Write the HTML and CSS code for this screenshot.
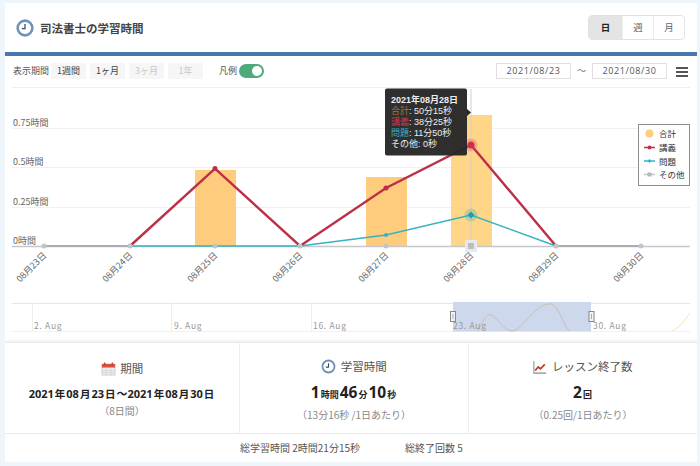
FILE: index.html
```html
<!DOCTYPE html>
<html lang="ja">
<head>
  <meta charset="UTF-8" />
  <meta name="viewport" content="width=device-width, initial-scale=1" />
  <title>司法書士の学習時間</title>
  <link rel="stylesheet" href="styles.css">
</head>
<body>

  <div class="panel">
    <div class="panel-head">
      <div class="panel-title">
        <svg class="clock" viewBox="0 0 20 20" width="18" height="18">
          <circle cx="10" cy="10" r="8.2" fill="#fff" stroke="#6f93b8" stroke-width="2.8"/>
          <path d="M10 5.500V10.800H6.500" fill="none" stroke="#3c4a58" stroke-width="1.400"/>
        </svg>
        <h2>司法書士の学習時間</h2>
      </div>
      <div class="unit-group">
        <span class="unit active">日</span>
        <span class="unit">週</span>
        <span class="unit">月</span>
      </div>
    </div>

    <div class="toolbar">
      <span class="toolbar-label">表示期間</span>
      <div class="range-group">
        <span class="range">1週間</span>
        <span class="range">1ヶ月</span>
        <span class="range off">3ヶ月</span>
        <span class="range off">1年</span>
      </div>
      <span class="legend-label">凡例</span>
      <span class="toggle"></span>
      <div class="dates">
        <span class="date-box">2021/08/23</span>
        <span class="date-sep">～</span>
        <span class="date-box">2021/08/30</span>
        <span class="burger"><i></i><i></i><i></i></span>
      </div>
    </div>

    <!-- viewBox uses page coordinates so the points read like the screenshot -->
    <svg class="chart" viewBox="5 88 692 252" width="692" height="252">
      <g stroke="#f0f0f0" stroke-width="1">
        <path d="M12 128.500H690M12 167.500H690M12 207.500H690"/>
      </g>
      <g class="axis-y">
        <text x="13" y="126">0.75時間</text>
        <text x="13" y="165">0.5時間</text>
        <text x="13" y="205">0.25時間</text>
        <text x="13" y="244">0時間</text>
      </g>

      <rect x="195" y="170" width="41" height="76" fill="#ffcb7d"/>
      <rect x="366" y="177" width="41" height="69" fill="#ffcb7d"/>
      <rect x="451" y="115" width="41" height="131" fill="#ffd687"/>
      <path d="M471 89V246" stroke="#cfcfcf" stroke-width="1"/>
      <path d="M12 246.500H690" stroke="#c4c8cc" stroke-width="1.500"/>

      <path d="M44 246H130M556 246H641" stroke="#aaacb0" stroke-width="2"/>
      <path d="M130 246H300L386 235L471 215L556 246" fill="none" stroke="#35b3c1" stroke-width="1.500"/>
      <path d="M130 246L215 168.500L300 246L386 188L471 145L556 246" fill="none" stroke="#bd2f48" stroke-width="2.400"/>

      <g fill="#c4c4c8">
        <circle cx="44" cy="246" r="2.500"/>
        <circle cx="130" cy="246" r="2.500"/>
        <circle cx="215" cy="246" r="2.500"/>
        <circle cx="300" cy="246" r="2.500"/>
        <circle cx="386" cy="246" r="2.500"/>
        <circle cx="556" cy="246" r="2.500"/>
        <circle cx="641" cy="246" r="2.500"/>
      </g>
      <circle cx="215" cy="168.500" r="2.500" fill="#bd2f48"/>
      <circle cx="386" cy="188" r="2.500" fill="#bd2f48"/>
      <circle cx="386" cy="235" r="2" fill="#35b3c1"/>
      <rect x="465" y="240" width="12" height="12" fill="#e9e9ea"/>
      <rect x="468" y="243" width="6" height="6" fill="#bdbdc0"/>
      <circle cx="471" cy="215" r="6.500" fill="#35b3c1" fill-opacity=".3"/>
      <path d="M471 211.500L474.500 215L471 218.500L467.500 215Z" fill="#1f9fb0"/>
      <circle cx="471" cy="145" r="6.500" fill="#e0405c" fill-opacity=".3"/>
      <circle cx="471" cy="145" r="3.500" fill="#cb2f4f"/>

      <g class="axis-x">
        <text transform="translate(47 256) rotate(-45)">08月23日</text>
        <text transform="translate(133 256) rotate(-45)">08月24日</text>
        <text transform="translate(218 256) rotate(-45)">08月25日</text>
        <text transform="translate(303 256) rotate(-45)">08月26日</text>
        <text transform="translate(389 256) rotate(-45)">08月27日</text>
        <text transform="translate(474 256) rotate(-45)">08月28日</text>
        <text transform="translate(559 256) rotate(-45)">08月29日</text>
        <text transform="translate(644 256) rotate(-45)">08月30日</text>
      </g>

      <path d="M467 109L471 112.500L467 116Z" fill="#262626"/>
      <rect x="385" y="88.500" width="82" height="67" rx="2" fill="#262626" fill-opacity=".96"/>
      <g class="tip">
        <text x="391" y="103" class="tip-head">2021年08月28日</text>
        <text x="391" y="114"><tspan fill="#a5773a">合計</tspan>: 50分15秒</text>
        <text x="391" y="125"><tspan fill="#d8344f">講義</tspan>: 38分25秒</text>
        <text x="391" y="136"><tspan fill="#35b3c1">問題</tspan>: 11分50秒</text>
        <text x="391" y="147" class="tip-other">その他: 0秒</text>
      </g>

      <rect x="638.500" y="124.500" width="51" height="61" fill="#fff" stroke="#8d8d8d"/>
      <circle cx="649.500" cy="133.500" r="4" fill="#ffcb7d"/>
      <path d="M644 147.500H655" stroke="#bd2f48" stroke-width="1.500"/>
      <circle cx="649.500" cy="147.500" r="2" fill="#bd2f48"/>
      <path d="M644 161H655" stroke="#35b3c1" stroke-width="1.500"/>
      <path d="M649.500 159L651.500 161L649.500 163L647.500 161Z" fill="#35b3c1"/>
      <path d="M644 174.500H655" stroke="#c4c4c8" stroke-width="1.500"/>
      <rect x="647.500" y="172.500" width="4" height="4" fill="#b8b8bc"/>
      <g class="legend-text">
        <text x="659" y="137">合計</text>
        <text x="659" y="151">講義</text>
        <text x="659" y="165">問題</text>
        <text x="659" y="178">その他</text>
      </g>

      <path d="M12 303.500H690" stroke="#e4e6e8"/>
      <path d="M12 331.500H690" stroke="#fbf0df"/>
      <path d="M32.500 303V331M171.500 303V331M311.500 303V331" stroke="#eeeeee"/>
      <rect x="453" y="302" width="138" height="29.500" fill="#ced8ec"/>
      <path d="M478 331C484 318 487 314 491 315C497 316 503 331 512 331C522 331 534 304 550 304C558 304 562 322 569 331" fill="none" stroke="#c9bfb2" stroke-width="1"/>
      <path d="M672 331C680 327 685 320 690 313" fill="none" stroke="#f8e2b4" stroke-width="1"/>
      <g class="nav-label">
        <text x="34" y="329">2. Aug</text>
        <text x="174" y="329">9. Aug</text>
        <text x="313" y="329">16. Aug</text>
        <text x="453" y="329">23. Aug</text>
        <text x="593" y="329">30. Aug</text>
      </g>
      <g fill="#f4f4f4" stroke="#888">
        <rect x="450.500" y="311.500" width="5" height="10"/>
        <rect x="589" y="311.500" width="5" height="10"/>
      </g>
      <path d="M453 314V319M591.500 314V319" stroke="#aaa"/>
    </svg>
  </div>

  <div class="summary">
    <div class="stat-row">
      <div class="stat stat-first">
        <h3>
          <svg viewBox="0 0 16 16" width="15" height="15">
            <rect x="1" y="4" width="14" height="11" fill="#efefef" stroke="#cfcfcf"/>
            <rect x="1" y="3" width="14" height="4" fill="#d9503f"/>
            <path d="M4 1.500V4M12 1.500V4" stroke="#8a3a30" stroke-width="1.200"/>
            <path d="M1 10H15M1 12.500H15M5.500 7V15M10.500 7V15" stroke="#d2d2d2" stroke-width=".8"/>
          </svg>
          期間
        </h3>
        <p class="value value-date">2021<small>年</small>08<small>月</small>23<small>日</small>～2021<small>年</small>08<small>月</small>30<small>日</small></p>
        <p class="sub">（8日間）</p>
      </div>
      <div class="stat">
        <h3>
          <svg viewBox="0 0 20 20" width="15" height="15">
            <circle cx="10" cy="10" r="8" fill="#fff" stroke="#6f93b8" stroke-width="2.400"/>
            <path d="M10 5.500V10.800H6.500" fill="none" stroke="#3c4a58" stroke-width="1.400"/>
          </svg>
          学習時間
        </h3>
        <p class="value">1<small>時間</small>46<small>分</small>10<small>秒</small></p>
        <p class="sub">（13分16秒 /1日あたり）</p>
      </div>
      <div class="stat">
        <h3>
          <svg viewBox="0 0 16 16" width="14" height="14">
            <path d="M1 1V15H15" fill="none" stroke="#8a8f96" stroke-width="1.200"/>
            <path d="M2.500 12L6 8L8.500 10L13.500 5" fill="none" stroke="#c0392b" stroke-width="2"/>
          </svg>
          レッスン終了数
        </h3>
        <p class="value">2<small>回</small></p>
        <p class="sub">（0.25回/1日あたり）</p>
      </div>
    </div>
    <div class="totals">
      <span>総学習時間 2時間21分15秒</span>
      <span>総終了回数 5</span>
    </div>
  </div>

</body>
</html>
```

FILE: styles.css
```css
* {
  box-sizing: border-box;
}
body {
  margin: 0;
  padding: 3px 3px 0 5px;
  height: 466px;
  overflow: hidden;
  background-color: #eef5fb;
  color: #333;
  font-family: 'Noto Sans CJK JP', 'Open Sans', sans-serif;
}

.panel {
  background-color: #fff;
}
.panel-head {
  height: 53px;
  padding: 12px 12px 0 11px;
  display: flex;
  justify-content: space-between;
  align-items: flex-start;
  border-bottom: 4px solid #4a76ad;
}
.panel-title {
  display: flex;
  align-items: center;
  gap: 6px;
  margin-top: 4px;
}
.panel-title h2 {
  margin: 0;
  font-size: 11.500px;
  font-weight: bold;
  color: #444;
}
.unit-group {
  display: flex;
  height: 25px;
  border: 1px solid #e2e2e2;
  border-radius: 4px;
  overflow: hidden;
}
.unit {
  width: 31px;
  font-size: 9.500px;
  line-height: 23px;
  text-align: center;
  color: #666;
  border-left: 1px solid #ececec;
}
.unit.active {
  width: 33px;
  border-left: none;
  background-color: #e4e4e4;
  color: #222;
  font-weight: bold;
}

.toolbar {
  height: 32px;
  margin: 0 7px 0 7px;
  padding: 7px 0 0 1px;
  display: flex;
  align-items: flex-start;
  border-bottom: 1px solid #eeeeee;
  font-size: 9px;
  line-height: 16px;
  color: #555;
}
.toolbar-label {
  width: 38px;
}
.range-group {
  display: flex;
  gap: 4px;
}
.range {
  width: 35px;
  height: 16px;
  text-align: center;
  background-color: #f6f6f6;
  color: #444;
}
.range.off {
  color: #c8c8c8;
}
.legend-label {
  margin-left: 16px;
}
.toggle {
  position: relative;
  width: 25px;
  height: 14px;
  margin: 1px 0 0 2px;
  border-radius: 7px;
  background-color: #4dab7b;
}
.toggle::after {
  content: "";
  position: absolute;
  top: 2px;
  right: 2px;
  width: 10px;
  height: 10px;
  border-radius: 50%;
  background-color: #fff;
}
.dates {
  margin-left: auto;
  display: flex;
  align-items: flex-start;
}
.date-box {
  width: 75px;
  height: 16px;
  border: 1px solid #e0e0e0;
  font-family: 'Open Sans', sans-serif;
  font-size: 9px;
  line-height: 14px;
  letter-spacing: 0.6px;
  text-align: center;
  color: #555;
}
.date-sep {
  width: 21px;
  text-align: center;
  color: #777;
}
.burger {
  width: 12px;
  margin: 4px 2px 0 9px;
  display: flex;
  flex-direction: column;
  gap: 2px;
}
.burger i {
  display: block;
  height: 2px;
  background-color: #555;
}

.chart {
  display: block;
}
.chart text {
  font-family: 'Noto Sans CJK JP', 'Open Sans', sans-serif;
}
.axis-y text,
.axis-x text {
  font-size: 9px;
  fill: #666;
}
.axis-x text {
  text-anchor: end;
}
.chart .tip text {
  font-family: 'Liberation Sans', 'Noto Sans CJK JP', sans-serif;
  font-size: 9px;
  fill: #eee;
}
.tip .tip-head {
  font-weight: bold;
  fill: #fff;
}
.tip .tip-other {
  fill: #bbb;
}
.legend-text text {
  font-size: 8.500px;
  fill: #333;
}
.nav-label text {
  font-size: 8.500px;
  letter-spacing: 0.7px;
  fill: #999;
}

.summary {
  margin-top: 2px;
  background-color: #fff;
  border-top: 1px solid #e8eaec;
}
.stat-row {
  display: grid;
  grid-template-columns: 234px 229px 1fr;
  height: 91px;
  border-bottom: 1px solid #e8eaec;
}
.stat {
  padding-top: 13px;
  text-align: center;
  border-left: 1px solid #eeeeee;
}
.stat-first {
  border-left: none;
  padding-top: 15px;
}
.stat h3 {
  margin: 0;
  font-size: 11.500px;
  font-weight: 400;
  line-height: 20px;
  color: #555;
}
.stat h3 svg {
  vertical-align: -3px;
  margin-right: 2px;
}
.value {
  margin: 6px 0 0;
  font-family: 'Open Sans', 'Noto Sans CJK JP', sans-serif;
  font-size: 15.500px;
  font-weight: bold;
  line-height: 20px;
  color: #222;
}
.value small {
  font-family: 'Noto Sans CJK JP', sans-serif;
  font-size: 9px;
  margin: 0 1px;
}
.value-date {
  font-size: 11px;
}
.value-date small {
  font-size: 10.500px;
}
.sub {
  margin: 2px 0 0;
  font-size: 10px;
  line-height: 16px;
  color: #888;
}
.stat-first .sub {
  margin-top: -1px;
}

.totals {
  height: 28px;
  padding-left: 235px;
  display: flex;
  gap: 45px;
  font-size: 10px;
  line-height: 28px;
  color: #555;
}
```
